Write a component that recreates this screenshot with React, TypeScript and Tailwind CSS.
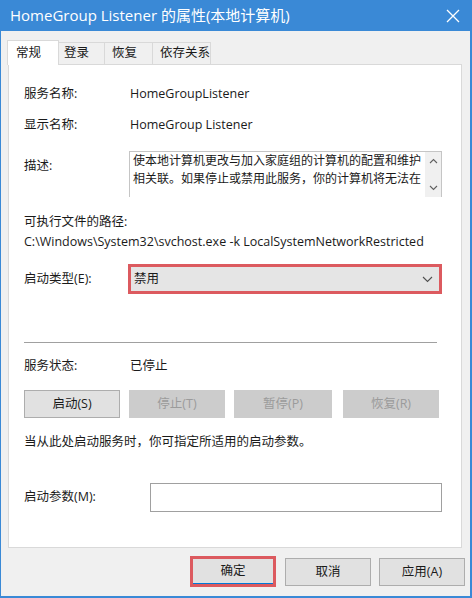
import React from "react";

const F = { fontFamily: '"Segoe UI", "Open Sans", "Noto Sans CJK SC", sans-serif' };

function Row({ label, children, className = "" }: { label: string; children?: React.ReactNode; className?: string }) {
  return (
    <div className={"flex items-center h-[20px] " + className}>
      <div className="w-[106px] shrink-0">{label}</div>
      {children}
    </div>
  );
}

export default function App() {
  return (
    <div
      className="w-[472px] h-[598px] flex flex-col bg-[#f0f0f0] border-l border-r-2 border-b-2 border-[#3a89d6] text-[12.5px] text-[#1a1a1a] overflow-hidden"
      style={F}
    >
      {/* Title bar */}
      <div className="h-[31px] shrink-0 bg-[#3a89d6] flex items-center justify-between pl-[9px] pr-[8px] text-white">
        <span className="text-[15px] leading-none">HomeGroup Listener 的属性(本地计算机)</span>
        <svg width="14" height="14" viewBox="0 0 14 14" className="mr-[2px]">
          <path d="M1 1 L13 13 M13 1 L1 13" stroke="white" strokeWidth="1.3" fill="none" />
        </svg>
      </div>

      {/* Tabs */}
      <div className="flex items-end pt-[9px] pl-[6px] h-[33px] shrink-0 relative z-10">
        <div className="w-[52px] h-[25px] bg-white border border-b-0 border-[#d9d9d9] flex items-center pl-[8px] mb-[-1px]">常规</div>
        <div className="w-[46px] h-[22px] border-t border-r border-[#d9d9d9] flex items-center pl-[5px]">登录</div>
        <div className="w-[48px] h-[22px] border-t border-r border-[#d9d9d9] flex items-center pl-[7px]">恢复</div>
        <div className="w-[58px] h-[22px] border-t border-r border-[#d9d9d9] flex items-center pl-[7px]">依存关系</div>
      </div>

      {/* Panel */}
      <div className="ml-[7px] mr-[8px] h-[484px] shrink-0 bg-white border border-[#d9d9d9] flex flex-col pl-[15px] pr-[19px]">
        <Row label="服务名称:" className="mt-[19px]">
          <span>HomeGroupListener</span>
        </Row>
        <Row label="显示名称:" className="mt-[11px]">
          <span>HomeGroup Listener</span>
        </Row>

        <div className="flex items-start mt-[16px] h-[46px]">
          <div className="w-[105px] shrink-0 mt-[6px]">描述:</div>
          <div className="flex-1 h-[46px] border border-b-0 border-[#c5c5c5] flex">
            <div className="flex-1 pl-[3px] leading-[18px] text-[12px] overflow-hidden whitespace-nowrap">
              <div>使本地计算机更改与加入家庭组的计算机的配置和维护</div>
              <div>相关联。如果停止或禁用此服务，你的计算机将无法在</div>
            </div>
            <div className="w-[16px] shrink-0 bg-[#f0f0f0] flex flex-col items-center justify-between py-[6px]">
              <svg width="9" height="6" viewBox="0 0 9 6"><path d="M1 5 L4.5 1.5 L8 5" stroke="#606060" strokeWidth="1.1" fill="none" /></svg>
              <svg width="9" height="6" viewBox="0 0 9 6"><path d="M1 1 L4.5 4.5 L8 1" stroke="#606060" strokeWidth="1.1" fill="none" /></svg>
            </div>
          </div>
        </div>

        <div className="h-[20px] flex items-center mt-[15px]">可执行文件的路径:</div>
        <div className="h-[20px] flex items-center">C:\Windows\System32\svchost.exe -k LocalSystemNetworkRestricted</div>

        <div className="flex items-center mt-[12px] h-[30px]">
          <div className="w-[104px] shrink-0">启动类型(E):</div>
          <div className="flex-1 h-[30px] border-[3px] border-[#dc5a5f] bg-[#e5e5e5] flex items-center justify-between pl-[3px] pr-[6px]">
            <span>禁用</span>
            <svg width="11" height="7" viewBox="0 0 11 7"><path d="M1 1 L5.5 5.5 L10 1" stroke="#505050" strokeWidth="1.1" fill="none" /></svg>
          </div>
        </div>

        <div className="mt-[48px] h-px bg-[#a0a0a0] mr-[5px]" />

        <Row label="服务状态:" className="mt-[13px]">
          <span>已停止</span>
        </Row>

        <div className="flex items-center mt-[14px] h-[28px]">
          <div className="w-[96px] h-[28px] bg-[#e1e1e1] border border-[#adadad] flex items-center justify-center">启动(S)</div>
          <div className="w-[96px] h-[28px] ml-[9px] bg-[#cccccc] text-[#9b9b9b] flex items-center justify-center">停止(T)</div>
          <div className="w-[98px] h-[28px] ml-[9px] bg-[#cccccc] text-[#9b9b9b] flex items-center justify-center">暂停(P)</div>
          <div className="w-[96px] h-[28px] ml-[11px] bg-[#cccccc] text-[#9b9b9b] flex items-center justify-center">恢复(R)</div>
        </div>

        <div className="h-[20px] flex items-center mt-[14px]">当从此处启动服务时，你可指定所适用的启动参数。</div>

        <div className="flex items-center mt-[31px] h-[29px]">
          <div className="w-[126px] shrink-0">启动参数(M):</div>
          <div className="flex-1 h-[29px] border border-[#a0a0a0] bg-white" />
        </div>
      </div>

      {/* Bottom buttons */}
      <div className="flex items-start justify-end mt-[8px] pr-[5px]">
        <div className="w-[86px] h-[31px] border-[3px] border-[#dc5a5f] bg-[#e1e1e1] flex flex-col">
          <div className="flex-1 flex items-center justify-center">确定</div>
          <div className="h-px bg-[#0078d7]" />
        </div>
        <div className="w-[86px] h-[28px] mt-[2px] ml-[9px] bg-[#e1e1e1] border border-[#adadad] flex items-center justify-center">取消</div>
        <div className="w-[86px] h-[28px] mt-[2px] ml-[8px] bg-[#e1e1e1] border border-[#adadad] flex items-center justify-center">应用(A)</div>
      </div>
    </div>
  );
}
